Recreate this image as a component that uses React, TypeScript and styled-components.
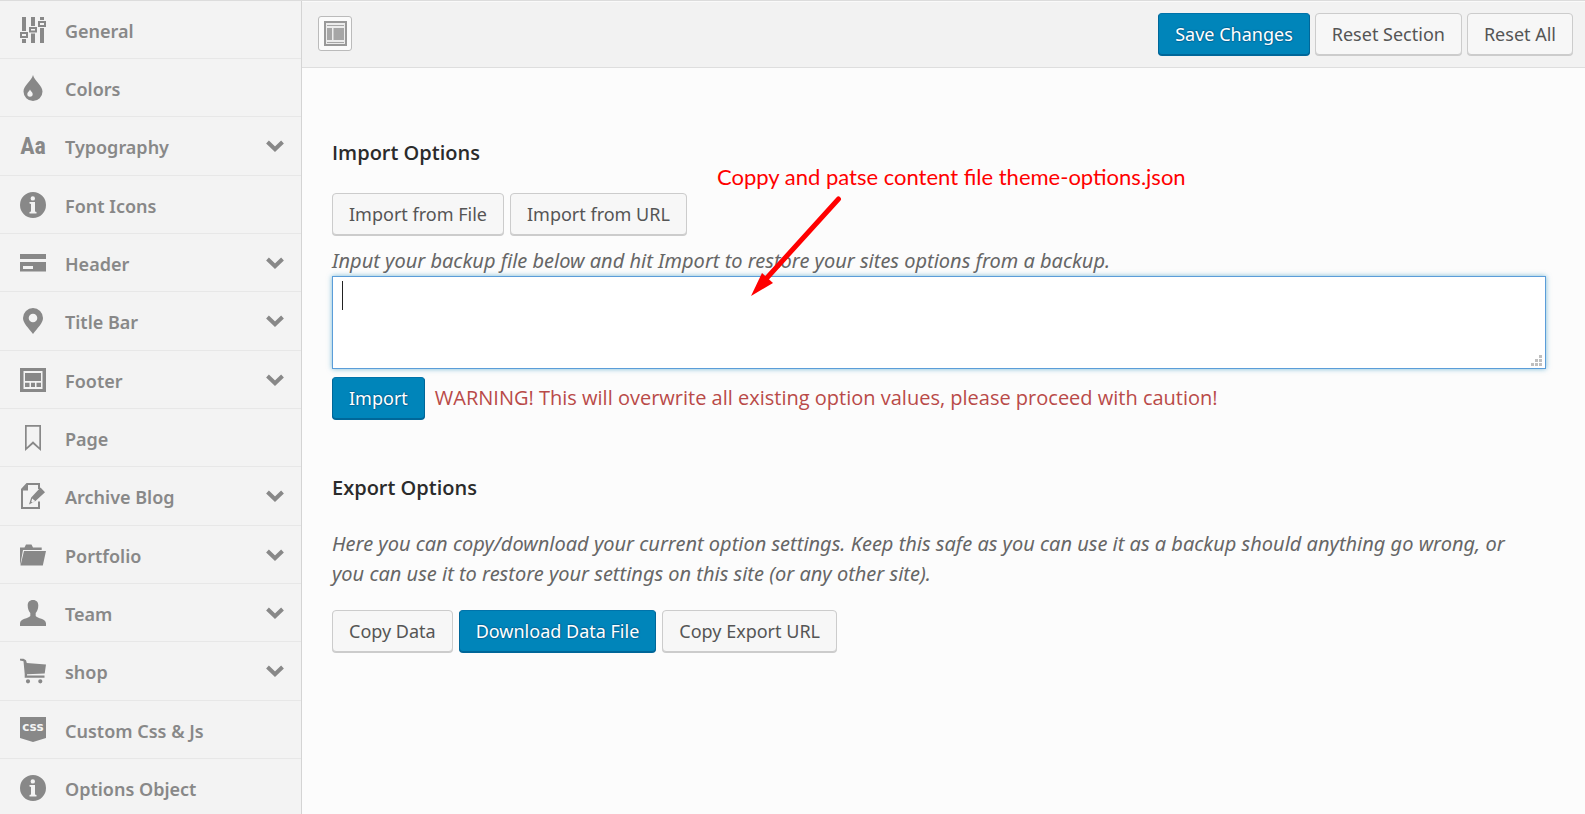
import React from "react";
import styled, { createGlobalStyle, css } from "styled-components";

const GlobalStyle = createGlobalStyle`
  *, *::before, *::after { box-sizing: border-box; }
  body {
    margin: 0;
    background: #fcfcfc;
    color: #555;
    font-family: "Segoe UI", "Noto Sans", sans-serif;
    font-size: 18px;
    line-height: 30px;
  }
`;

const Shell = styled.div`
  display: flex;
  height: 100vh;
  overflow: hidden;
  border-top: 1px solid #dcdcdc;
`;

const Sidebar = styled.nav`
  flex: 0 0 302px;
  overflow: hidden;
  background: #f3f3f3;
  border-right: 1px solid #d4d4d4;
`;

const MenuList = styled.ul`
  display: grid;
  grid-auto-rows: 58px 58px 59px;
  margin: 0;
  padding: 0;
  list-style: none;
`;

const MenuItem = styled.li`
  display: flex;
  border-bottom: 1px solid #e7e7e7;
`;

const MenuLink = styled.a`
  flex: 1;
  display: flex;
  align-items: center;
  gap: 19px;
  padding: 0 17px 0 20px;
  color: #888;
  font-size: 18px;
  font-weight: 600;
  line-height: 28px;
  text-decoration: none;
`;

const MenuLabel = styled.span`
  flex: 1;
  padding-top: 2px;
`;

const MenuIcon = styled.svg`
  flex: none;
  width: 26px;
  height: 26px;
  fill: #888;
`;

const Chevron = styled.svg`
  flex: none;
  width: 18px;
  height: 12px;
  fill: none;
  stroke: #888;
  stroke-width: 4;
`;

const Main = styled.main`
  flex: 1;
  min-width: 0;
`;

const Toolbar = styled.header`
  display: flex;
  align-items: center;
  justify-content: space-between;
  height: 67px;
  padding: 0 12px 2px 16px;
  background: #f2f2f2;
  border-top: 1px solid #fafafa;
  border-bottom: 1px solid #dedede;
`;

const ButtonRow = styled.div<{ $gap?: number }>`
  display: flex;
  align-items: center;
  gap: ${({ $gap = 6 }) => $gap}px;
`;

const Button = styled.button<{ $primary?: boolean }>`
  height: 42px;
  padding: 0 16px;
  border: 1px solid #ccc;
  border-radius: 4px;
  background: #f7f7f7;
  box-shadow: 0 1px 0 #ccc;
  color: #555;
  font: inherit;
  line-height: 40px;
  white-space: nowrap;
  cursor: pointer;

  ${({ $primary }) =>
    $primary &&
    css`
      border-color: #0073aa #006799 #006799;
      background: #0085ba;
      box-shadow: 0 1px 0 #006799;
      color: #fff;
      text-shadow: 0 -1px 1px #006799, 1px 0 1px #006799, 0 1px 1px #006799;
    `}
`;

const ToggleButton = styled.button`
  display: flex;
  align-items: center;
  justify-content: center;
  width: 34px;
  height: 35px;
  padding: 0;
  border: 1px solid #bbb;
  border-radius: 3px;
  background: #fbfbfb;
  cursor: pointer;
`;

const Content = styled.div`
  position: relative;
  padding: 70px 39px 0 30px;
`;

const Section = styled.section`
  margin-bottom: 54px;
`;

const Title = styled.h2<{ $space: number }>`
  margin: 0 0 ${({ $space }) => $space}px;
  color: #2b2b2b;
  font-family: "Segoe UI", "Open Sans", sans-serif;
  font-size: 20px;
  font-weight: 600;
  line-height: 30px;
`;

const Description = styled.p`
  margin: 0;
  padding-right: 12px;
  color: #666;
  font-size: 20px;
  font-style: italic;
  line-height: 30px;
`;

const ImportHint = styled.label`
  display: block;
  margin-top: 11px;
  color: #666;
  font-size: 20px;
  font-style: italic;
  line-height: 30px;
`;

const Field = styled.div`
  position: relative;
  margin-bottom: 8px;
`;

const TextArea = styled.textarea`
  display: block;
  width: 100%;
  height: 93px;
  padding: 5px 9px;
  border: 1px solid #5b9dd9;
  border-radius: 0;
  outline: none;
  resize: none;
  background: #fff;
  box-shadow: 0 0 5px rgba(30, 140, 190, 0.6);
  color: #32373c;
  font: inherit;
`;

const Caret = styled.span`
  position: absolute;
  top: 5px;
  left: 10px;
  width: 1px;
  height: 29px;
  background: #222;
`;

const Grip = styled.svg`
  position: absolute;
  right: 4px;
  bottom: 3px;
  width: 11px;
  height: 11px;
  fill: #bfbfbf;
`;

const Warning = styled.span`
  margin-left: 4px;
  color: #b94a48;
  font-family: "Segoe UI", "Open Sans", sans-serif;
  font-size: 20px;
`;

const ExportActions = styled(ButtonRow)`
  margin-top: 21px;
`;

const Note = styled.div`
  position: absolute;
  top: 94px;
  left: 415px;
  color: #f00;
  font-family: Lato, Carlito, sans-serif;
  font-size: 22px;
  line-height: 30px;
  white-space: nowrap;
`;

const NoteArrow = styled.svg`
  position: absolute;
  top: 124px;
  left: 447px;
  width: 96px;
  height: 106px;
  pointer-events: none;
`;

const icons = {
  sliders: (
    <path
      fillRule="evenodd"
      d="M2 0h4v14H2zM0 15h8v6H0zM2 17v2h4v-2zM2 22h4v4H2zM11 0h4v9h-4zM9 10h8v5.500H9zM11 12v1.500h4V12zM11 16.500h4V26h-4zM20 0h4v3h-4zM18 4h8v6h-8zM20 6v2h4V6zM20 11h4v15h-4z"
    />
  ),
  drop: (
    <path
      fillRule="evenodd"
      d="M13 0c1.500 6 9.500 10.500 9.500 16.500a9.500 9.500 0 0 1-19 0C3.500 10.500 11.500 6 13 0zM10 14.500c-.6 2-2.700 2.700-2.700 4.600a2.700 2.700 0 0 0 5.400 0c0-1.900-2.100-2.600-2.700-4.600z"
    />
  ),
  type: (
    <text
      x="13"
      y="21"
      textAnchor="middle"
      fontFamily="'Roboto Condensed', Roboto, sans-serif"
      fontWeight="700"
      fontSize="24"
    >
      Aa
    </text>
  ),
  info: (
    <path
      fillRule="evenodd"
      d="M13 0a13 13 0 1 1 0 26a13 13 0 0 1 0-26zM12.800 4.200a2.200 2.200 0 1 0 0 4.400a2.200 2.200 0 0 0 0-4.400zM9.500 10v1.500l1.500.4v7.600l-1.500.5v1.500h7V20l-1.500-.5V10z"
    />
  ),
  header: (
    <path fillRule="evenodd" d="M0 4h26v5H0zM0 12h26v9.500H0zM3 16v3h10v-3z" />
  ),
  pin: (
    <path
      fillRule="evenodd"
      d="M13 0a10 10 0 0 1 10 10c0 5-5.500 10-10 16C8.500 20 3 15 3 10A10 10 0 0 1 13 0zM13 5.700a4.300 4.300 0 1 0 0 8.600a4.300 4.300 0 0 0 0-8.600z"
    />
  ),
  footer: (
    <path
      fillRule="evenodd"
      d="M0 1h26v24H0zM3.500 4v18h19V4zM5 6h16v8H5zM5 15.700h4.500V20H5zM11 15.700h4V20h-4zM16.500 15.700H21V20h-4.500z"
    />
  ),
  bookmark: (
    <path fillRule="evenodd" d="M5 0h16v26l-8-7-8 7zM6.700 1.700v20.600l6.300-6 6.300 6V1.700z" />
  ),
  edit: (
    <>
      <path d="M19 2.500V1H7L2 6.500V25h17v-6.500" fill="none" stroke="#888" strokeWidth="2" />
      <path d="M2 7.500L8 1v6.500z" />
      <path d="M19 2v4" fill="none" stroke="#888" strokeWidth="2" />
      <path
        fillRule="evenodd"
        d="M20.500 4.500L25 9.300 15.500 18l-6.500 3.500 2.200-7zM12.200 15.500l-.9 3.300.9.700 3-1.500z"
      />
    </>
  ),
  folder: (
    <>
      <path d="M0 23.500V5.500h4.500L6 2.500h5.500L13 5.500h8.700V8H3L.8 20z" />
      <path d="M4 9h22l-3.200 14.500H.5z" />
    </>
  ),
  person: (
    <path d="M13 0c3.600 0 5.300 2.300 5.300 5.500 0 3.500-1.300 6-2.600 7.500v3c1.500 2.500 10.300 2.500 10.300 7.500V26H0v-2.500C0 18.500 8.800 18.500 10.300 16v-3C9 11.500 7.700 9 7.700 5.500 7.700 2.300 9.400 0 13 0z" />
  ),
  cart: (
    <path d="M0 .7h3.500L6 2.200l.8 2.800L26 6.500 24.700 15.500 7 16.200v1.300h17.500v2.300H4.700v-4L3.500 3.300 0 2.500zM8 21.200a2.100 2.100 0 1 1 0 4.200a2.100 2.100 0 0 1 0-4.200zM20.300 21.200a2.100 2.100 0 1 1 0 4.200a2.100 2.100 0 0 1 0-4.200z" />
  ),
  css: (
    <>
      <path d="M0 0h26v21l-13 4-13-4z" />
      <text
        x="13"
        y="14"
        textAnchor="middle"
        fill="#f3f3f3"
        fontFamily="'DejaVu Sans', sans-serif"
        fontWeight="700"
        fontSize="12"
      >
        css
      </text>
    </>
  ),
};

type MenuEntry = { label: string; icon: keyof typeof icons; expandable?: boolean };

const menu: MenuEntry[] = [
  { label: "General", icon: "sliders" },
  { label: "Colors", icon: "drop" },
  { label: "Typography", icon: "type", expandable: true },
  { label: "Font Icons", icon: "info" },
  { label: "Header", icon: "header", expandable: true },
  { label: "Title Bar", icon: "pin", expandable: true },
  { label: "Footer", icon: "footer", expandable: true },
  { label: "Page", icon: "bookmark" },
  { label: "Archive Blog", icon: "edit", expandable: true },
  { label: "Portfolio", icon: "folder", expandable: true },
  { label: "Team", icon: "person", expandable: true },
  { label: "shop", icon: "cart", expandable: true },
  { label: "Custom Css & Js", icon: "css" },
  { label: "Options Object", icon: "info" },
];

export default function App() {
  return (
    <>
      <GlobalStyle />
      <Shell>
        <Sidebar aria-label="Option sections">
          <MenuList>
            {menu.map(({ label, icon, expandable }) => (
              <MenuItem key={label}>
                <MenuLink href="#">
                  <MenuIcon viewBox="0 0 26 26" aria-hidden="true">
                    {icons[icon]}
                  </MenuIcon>
                  <MenuLabel>{label}</MenuLabel>
                  {expandable && (
                    <Chevron viewBox="0 0 18 12" aria-hidden="true">
                      <path d="M1.500 2L9 9.200 16.500 2" />
                    </Chevron>
                  )}
                </MenuLink>
              </MenuItem>
            ))}
          </MenuList>
        </Sidebar>

        <Main>
          <Toolbar>
            <ToggleButton type="button" aria-label="Expand options">
              <svg width="23" height="25" viewBox="0 0 23 25" aria-hidden="true">
                <rect x="1" y="1" width="21" height="23" fill="#ececec" stroke="#999" strokeWidth="2" />
                <path d="M3 4.500h17M3 21.500h17" stroke="#a6a6a6" strokeWidth="1" />
                <path d="M3 7h5v12H3zM9.500 7H20v12H9.500z" fill="#a6a6a6" />
              </svg>
            </ToggleButton>
            <ButtonRow $gap={5}>
              <Button type="button" $primary>Save Changes</Button>
              <Button type="button">Reset Section</Button>
              <Button type="button">Reset All</Button>
            </ButtonRow>
          </Toolbar>

          <Content>
            <Section>
              <Title $space={25}>Import Options</Title>
              <ButtonRow>
                <Button type="button">Import from File</Button>
                <Button type="button">Import from URL</Button>
              </ButtonRow>
              <ImportHint htmlFor="import-data">
                Input your backup file below and hit Import to restore your sites options from a backup.
              </ImportHint>
              <Field>
                <TextArea id="import-data" />
                <Caret />
                <Grip viewBox="0 0 11 11" aria-hidden="true">
                  <path d="M8 0h3v3H8zM4 4h3v3H4zM8 4h3v3H8zM0 8h3v3H0zM4 8h3v3H4zM8 8h3v3H8z" />
                </Grip>
              </Field>
              <ButtonRow>
                <Button type="button" $primary>Import</Button>
                <Warning>
                  WARNING! This will overwrite all existing option values, please proceed with caution!
                </Warning>
              </ButtonRow>
            </Section>

            <Section>
              <Title $space={26}>Export Options</Title>
              <Description>
                Here you can copy/download your current option settings. Keep this safe as you can use it as a
                backup should anything go wrong, or you can use it to restore your settings on this site (or any
                other site).
              </Description>
              <ExportActions>
                <Button type="button">Copy Data</Button>
                <Button type="button" $primary>Download Data File</Button>
                <Button type="button">Copy Export URL</Button>
              </ExportActions>
            </Section>

            <Note>Coppy and patse content file theme-options.json</Note>
            <NoteArrow viewBox="0 0 96 106" aria-hidden="true">
              <path d="M89.500 7L16 88" stroke="#f00" strokeWidth="5" strokeLinecap="round" />
              <path d="M2 104L13 81L24 91z" fill="#f00" />
            </NoteArrow>
          </Content>
        </Main>
      </Shell>
    </>
  );
}
